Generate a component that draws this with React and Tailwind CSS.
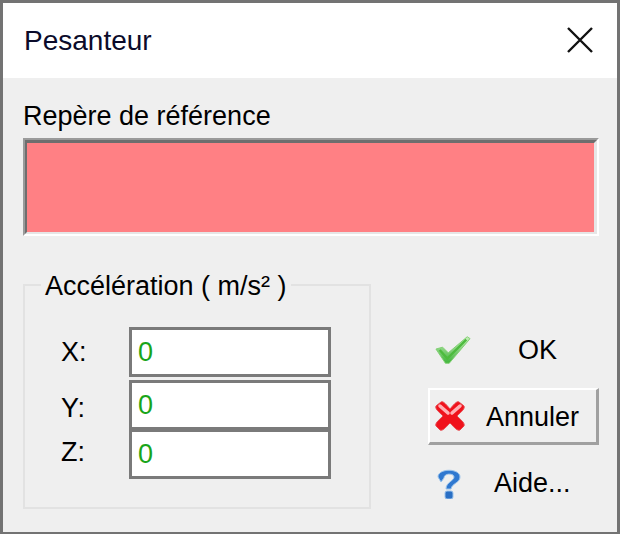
function Field({ value }) {
  return (
    <div className="w-[202px] h-[50px] border-[3px] border-[#7a7a7a] bg-white flex items-center pl-[6px] text-[27px] leading-none text-[#1aa51a]">
      {value}
    </div>
  );
}

function Row({ label, value, className = "", labelClass = "" }) {
  return (
    <div className={`flex items-center ${className}`}>
      <span className={`w-[68px] text-[27px] leading-none text-black ${labelClass}`}>{label}</span>
      <Field value={value} />
    </div>
  );
}

export default function App() {
  return (
    <div className="w-[620px] h-[534px] flex flex-col border-[3px] border-b-2 border-[#737373] bg-[#efefef] font-['Liberation_Sans',sans-serif] overflow-hidden">
      <div className="h-[75px] shrink-0 bg-white flex items-center justify-between pl-[21px] pr-[24px]">
        <span className="text-[28px] text-[#0b0b2a] leading-none">Pesanteur</span>
        <svg width="26" height="26" viewBox="0 0 26 26" className="-mt-[2px]">
          <path d="M1 1 L25 25 M25 1 L1 25" stroke="#111" strokeWidth="2.4" fill="none" />
        </svg>
      </div>
      <div className="flex-1 flex flex-col pl-[20px] pr-[20px] pt-[24px]">
        <div className="text-[27px] leading-[28px] text-black h-[36px]">Repère de référence</div>
        <div className="w-[576px] h-[98px] shrink-0 border-t-2 border-l-2 border-r-2 border-b-2 border-t-[#9a9a9a] border-l-[#9a9a9a] border-r-white border-b-white">
          <div className="w-full h-full bg-[#ff8084] border-t-[3px] border-l-[2px] border-r-[3px] border-b-[2px] border-t-[#6e6e6e] border-l-[#6e6e6e] border-r-[#e6e6e6] border-b-[#e6e6e6]"></div>
        </div>
        <div className="flex mt-[35px]">
          <fieldset className="w-[348px] h-[240px] shrink-0 border-2 border-[#e2e2e2] pl-[36px] pr-0 m-0 -mt-[2px] min-w-0">
            <legend className="ml-[-20px] px-[4px] pt-[3px] text-[27px] leading-[28px] text-black">Accélération ( m/s² )</legend>
            <div className="flex flex-col mt-[27px]">
              <Row label="X:" value="0" />
              <Row label="Y:" value="0" className="mt-[3px]" labelClass="pt-[6px]" />
              <Row label="Z:" value="0" className="-mt-[1px]" labelClass="pb-[4px]" />
            </div>
          </fieldset>
          <div className="ml-[57px] w-[171px] shrink-0 flex flex-col mt-[54px] text-[27px] text-black leading-none">
            <div className="h-[50px] flex items-center">
              <svg width="36" height="30" viewBox="0 0 38 30" className="ml-[7px]">
                <defs>
                  <linearGradient id="chk" x1="0" y1="0" x2="0" y2="1">
                    <stop offset="0" stopColor="#c8eebc" />
                    <stop offset="1" stopColor="#3fb43a" />
                  </linearGradient>
                </defs>
                <path d="M1 14 L8 12 L14 18 L34 1 L37 3 L15 29 L11 29 Z" fill="url(#chk)" stroke="#7fcf70" strokeWidth="1" strokeLinejoin="round" />
                <path d="M5 15 L13 24 L33 4" stroke="#4dbb3e" strokeWidth="2.5" fill="none" />
              </svg>
              <span className="ml-[47px]">OK</span>
            </div>
            <div className="mt-[13px] h-[57px] border-t-2 border-l-2 border-r-[3px] border-b-[3px] border-t-white border-l-white border-r-[#a0a0a0] border-b-[#a0a0a0] flex items-center">
              <svg width="32" height="32" viewBox="0 0 32 32" className="ml-[4px]">
                <path d="M7 2 C9 1 11 3 16 9 C21 3 23 1 25 2 L30 6 C31 9 28 11 23 16 C28 21 31 23 30 26 L26 30 C23 31 21 28 16 23 C11 28 9 31 6 30 L2 26 C1 23 4 21 9 16 C4 11 1 9 2 6 Z" fill="#f0121c" stroke="#e8484e" strokeWidth="1" />
                <path d="M6 6 L14 13 M26 6 L18 13" stroke="#ffb0b4" strokeWidth="3.5" strokeLinecap="round" />
              </svg>
              <span className="ml-[20px] pt-[3px]">Annuler</span>
            </div>
            <div className="mt-[15px] h-[46px] flex items-center">
              <svg width="24" height="31" viewBox="0 0 24 31" className="ml-[9px]">
                <path d="M1 9 C1 0 23 0 23 9 C23 15 15 15 14 21 L9 21 C9 14 17 13 17 9 C17 5 7 5 7 10 L4 14 Z" fill="#2f78d0" stroke="#9cc4ec" strokeWidth="1" />
                <rect x="8" y="23" width="8" height="8" rx="2" fill="#2a6fc4" stroke="#9cc4ec" strokeWidth="1" />
              </svg>
              <span className="ml-[33px]">Aide...</span>
            </div>
          </div>
        </div>
      </div>
    </div>
  );
}
